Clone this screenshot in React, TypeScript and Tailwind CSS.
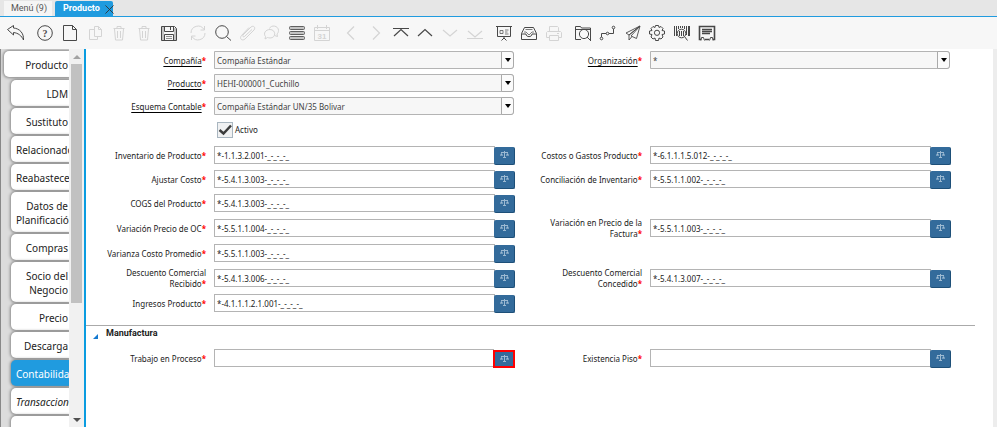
import React, { useState } from "react";

type Account = { label: string; value: string; marked?: boolean };

const sideTabs = [
  { name: "Producto", parent: true },
  { name: "LDM" },
  { name: "Sustituto" },
  { name: "Relacionado" },
  { name: "Reabastecer" },
  { name: "Datos de Planificación" },
  { name: "Compras" },
  { name: "Socio del Negocio" },
  { name: "Precio" },
  { name: "Descarga" },
  { name: "Contabilidad", active: true },
  { name: "Transacciones", italic: true },
];

const firstAccounts: (Account | null)[][] = [
  [
    { label: "Inventario de Producto", value: "*-1.1.3.2.001-_-_-_-_" },
    { label: "Costos o Gastos Producto", value: "*-6.1.1.1.5.012-_-_-_-_" },
  ],
  [
    { label: "Ajustar Costo", value: "*-5.4.1.3.003-_-_-_-_" },
    { label: "Conciliación de Inventario", value: "*-5.5.1.1.002-_-_-_-_" },
  ],
  [{ label: "COGS del Producto", value: "*-5.4.1.3.003-_-_-_-_" }, null],
];

const moreAccounts: (Account | null)[][] = [
  [
    { label: "Variación Precio de OC", value: "*-5.5.1.1.004-_-_-_-_" },
    { label: "Variación en Precio de la Factura", value: "*-5.5.1.1.003-_-_-_-_" },
  ],
  [{ label: "Varianza Costo Promedio", value: "*-5.5.1.1.003-_-_-_-_" }, null],
  [
    { label: "Descuento Comercial Recibido", value: "*-5.4.1.3.006-_-_-_-_" },
    { label: "Descuento Comercial Concedido", value: "*-5.4.1.3.007-_-_-_-_" },
  ],
  [{ label: "Ingresos Producto", value: "*-4.1.1.1.2.1.001-_-_-_-_" }, null],
];

const manufacturing: (Account | null)[][] = [
  [
    { label: "Trabajo en Proceso", value: "", marked: true },
    { label: "Existencia Piso", value: "" },
  ],
];

const trash = <path d="M3.500 4.500h11M7 4.500v-2h4v2M4.500 5l1 11h7l1-11M7.500 7v7M10.500 7v7" />;

const toolGroups = [
  [
    {
      name: "Deshacer",
      icon: <path d="M.5 5.500l6-4V4c6 .5 10.500 5 10 12-2-4.500-5.500-7-10-7.500V11z" />,
    },
  ],
  [
    {
      name: "Ayuda",
      icon: (
        <>
          <circle cx="9" cy="9" r="7.300" />
          <text x="9" y="12.500" textAnchor="middle" fontSize="10" fontWeight="700" fontFamily="Liberation Serif, serif" fill="currentColor" stroke="none">
            ?
          </text>
        </>
      ),
    },
    { name: "Nuevo", icon: <path d="M2.500 1.500h9l4 4v11h-13zM11.500 1.500v4h4" /> },
    {
      name: "Copiar",
      off: true,
      icon: <path d="M8.500 12.500v-10h4l3 3v7zM12.500 2.500v3h3M8.500 5.500h-5v10h8v-3" />,
    },
    { name: "Borrar", off: true, icon: trash },
    { name: "Borrar selección", off: true, icon: trash },
    {
      name: "Guardar",
      icon: (
        <>
          <path d="M1.500 2.500h13l2 2v12h-15zM4.500 2.500v5h9v-5M10.500 3v3M4.500 16v-5.500h9V16" />
          <path strokeWidth=".6" d="M6 12.500h6M6 14.500h6M3 3v13M15 4v12" />
        </>
      ),
    },
  ],
  [
    {
      name: "Refrescar",
      off: true,
      icon: <path d="M2 9a7 7 0 0 1 13-3.500M16 9a7 7 0 0 1-13 3.500M15.500 2v4h-4M2.500 16v-4h4" />,
    },
    {
      name: "Buscar",
      icon: (
        <>
          <circle cx="8" cy="8" r="6.300" />
          <path d="M12.500 12.500l4.500 4" />
        </>
      ),
    },
    {
      name: "Adjuntar",
      off: true,
      icon: <path d="M13 5.500l-7.500 7c-1 1-2.500-.5-1.500-1.500l8-8c2.500-2 5 .5 3 3l-9 9c-3 2.500-6-.5-3.500-3.500l7.500-8" />,
    },
    {
      name: "Chat",
      off: true,
      icon: (
        <path d="M6.500 4.500C8 .5 15.500 1.500 15.500 6.500c0 1.500-.5 2.500-1.500 3.500l.5 2.500-3-1M7 5.500c6 0 6.500 8.500 0 8.500-1 0-2-.5-2.500-.5L2 15l.5-2.500C0 9.500 2.500 5.500 7 5.500z" />
      ),
    },
    {
      name: "Cuadrícula",
      icon: (
        <g fill="#c4c4c4" stroke="#606060">
          <rect x="1.500" y="2.500" width="15" height="3" rx="1" />
          <rect x="1.500" y="7.500" width="15" height="3" rx="1" />
          <rect x="1.500" y="12.500" width="15" height="3" rx="1" />
        </g>
      ),
    },
    {
      name: "Historial",
      off: true,
      icon: (
        <>
          <path d="M1.500 3.500h15v13h-15zM1.500 6.500h15M4.500 1v4M13.500 1v4" />
          <text x="9" y="14.500" textAnchor="middle" fontSize="8" fontWeight="700" fontFamily="Liberation Sans, sans-serif" fill="currentColor" stroke="none">
            31
          </text>
        </>
      ),
    },
  ],
  [
    { name: "Atrás", off: true, icon: <path strokeWidth="1.200" d="M12 2.500L5.500 9l6.500 6.500" /> },
    { name: "Adelante", off: true, icon: <path strokeWidth="1.200" d="M6 2.500L12.500 9 6 15.500" /> },
    { name: "Primer registro", icon: <path strokeWidth="1.200" d="M1 4.500h16M2 12l7-6.500 7 6.500" /> },
    { name: "Registro anterior", icon: <path strokeWidth="1.200" d="M2 12l7-6.500 7 6.500" /> },
    { name: "Registro siguiente", off: true, icon: <path strokeWidth="1.200" d="M2 6l7 6 7-6" /> },
    { name: "Último registro", off: true, icon: <path strokeWidth="1.200" d="M2 7l7 6 7-6M1 14.500h16" /> },
  ],
  [
    {
      name: "Informe",
      icon: (
        <>
          <path d="M1 2.500h16M2.500 3v9.500h13V3M9 12.500v2M6.500 16.500L9 14l2.500 2.500" />
          <path strokeWidth=".7" d="M5 6.500h3v3H5zM10 6h3.500M10 8h2.500M10 10h3.500" />
        </>
      ),
    },
    {
      name: "Archivar",
      icon: (
        <>
          <path d="M4.500 3.500h9l3 6v6h-15v-6zM1.500 10H6c0 3.500 6 3.500 6 0h4.500" />
          <path strokeWidth=".7" d="M5.500 5.500h7M4 8h2l3 3 3-3h2" />
        </>
      ),
    },
    {
      name: "Imprimir",
      off: true,
      icon: <path d="M4.500 7V2.500h8l1 1V7M4.500 13.500h-3v-5l1-1h13l1 1v5h-3M4.500 11.500h9v5h-9zM12 9.500h2" />,
    },
  ],
  [
    {
      name: "Zoom",
      icon: (
        <>
          <path d="M7 15.500H1.500v-13h5l1 1.500h9v12M1.500 5.500h15" />
          <circle cx="10" cy="10" r="4.600" />
          <path d="M13 13l4 4" />
        </>
      ),
    },
    {
      name: "Flujo de trabajo",
      icon: (
        <>
          <path d="M2.500 13V9.500H7M10 9.500h4.500V5" />
          <circle cx="2.500" cy="14.500" r="1.300" />
          <circle cx="8.500" cy="9.500" r="1.300" />
          <circle cx="14.500" cy="3.500" r="1.300" />
        </>
      ),
    },
    {
      name: "Solicitudes",
      icon: <path strokeWidth=".9" d="M16 2L2 9l3 2zM16 2L5 11v5l3-3.500M16 2L7 12l5.500 2.500z" />,
    },
    {
      name: "Proceso",
      icon: (
        <>
          <path d="M7.500 1.500h3l.5 2 2-1 2 2-1 2 2.500.5v3L14 10.500l1 2.500-2 2-2-1-.5 2.500h-3L7 14l-2 1-2-2 1-2.500L1.500 10V7L4 6.500l-1-2 2-2 2 1z" />
          <circle cx="9" cy="8.800" r="2.600" />
        </>
      ),
    },
    {
      name: "Información del producto",
      icon: (
        <>
          <path d="M1.500 2v10M3.500 2v10M5.500 2v3M7.500 2v2M9.500 2v2M11.500 2v3M13.500 2v9" />
          <path strokeWidth="2" d="M16 2v10" />
          <circle cx="8.500" cy="9.500" r="4.300" />
          <path d="M6.500 7v5M8.500 7v5M10.500 7v5M11.500 12.500l3 4" />
        </>
      ),
    },
    {
      name: "Documento",
      icon: (
        <>
          <path strokeWidth="1.600" d="M3 15.500H1.500v-13h15v13H15M7 15.500h4" />
          <path strokeWidth="1.400" d="M4 5.500h10M4 7.500h10M4 9.500h8" />
          <path d="M3 16.500l.5-3h2l1 3M11.500 16.500l1-3h2l.5 3" />
        </>
      ),
    },
  ],
];

const Toolbar = () => (
  <div className="flex h-8 shrink-0 items-center gap-[11px] bg-[#f7f7f7] pl-[7px]">
    {toolGroups.map((group, i) => (
      <div
        key={i}
        className={`flex shrink-0 justify-between ${
          group.length === 1 ? "w-[18px]" : group.length === 3 ? "w-[68px]" : "w-[142px]"
        }`}
      >
        {group.map((tool: any) => (
          <button
            key={tool.name}
            aria-label={tool.name}
            disabled={tool.off}
            className={tool.off ? "text-[#d4d4d4]" : "text-[#484848]"}
          >
            <svg viewBox="0 0 18 18" className="block size-[18px]" fill="none" stroke="currentColor">
              {tool.icon}
            </svg>
          </button>
        ))}
      </div>
    ))}
  </div>
);

const SideBar = () => (
  <div className="flex w-[86px] shrink-0 border-r-2 border-[#0a9ce0] bg-[#f1f1f1]">
    <div className="flex w-[69px] flex-col gap-[2px] overflow-hidden border-l border-[#888] bg-[#dcdcdc] pt-[2px]">
      {sideTabs.map((tab) => (
        <button
          key={tab.name}
          className={`flex shrink-0 items-center rounded-l-[5px] pb-[5px] pl-[5px] pr-px pt-[7px] text-right text-[10px] leading-[14px] shadow-[0_0_3px_1px_#888] ${
            tab.parent ? "mb-px ml-[3px]" : "ml-[10px]"
          } ${tab.active ? "bg-[#209bdf] text-white" : "bg-white text-[#222]"} ${tab.italic ? "italic" : ""}`}
        >
          <span className="w-0 flex-1">{tab.name}</span>
        </button>
      ))}
      <div className="ml-[10px] h-[26px] shrink-0 rounded-l-[5px] bg-white shadow-[0_0_3px_1px_#888]" />
    </div>
    <div className="flex flex-1 flex-col items-center pb-[5px] pt-[6px]">
      <svg viewBox="0 0 8 4" className="h-1 w-2 shrink-0" fill="#a3a3a3">
        <path d="M0 4l4-4 4 4z" />
      </svg>
      <div className="mt-[5px] h-[239px] w-[11px] shrink-0 bg-[#c1c1c1]" />
      <svg viewBox="0 0 8 4" className="mt-auto h-1 w-2 shrink-0" fill="#505050">
        <path d="M0 0l4 4 4-4z" />
      </svg>
    </div>
  </div>
);

const FieldLabel = ({ id, text, link }: { id: string; text: string; link?: boolean }) => (
  <label htmlFor={id} className="w-32 shrink-0 pl-4 pr-2 text-right leading-[11px]">
    <span className={link ? "underline decoration-black decoration-1 underline-offset-2" : ""}>{text}</span>
    <span className="font-bold text-[#f00]">*</span>
  </label>
);

const SelectField = ({ label, value }: { label: string; value: string }) => (
  <div className="flex h-[18px] items-center pr-2">
    <FieldLabel id={label} text={label} link />
    <div className="relative h-[18px] flex-1">
      <select
        id={label}
        className="block h-full w-full appearance-none rounded-r-[3px] border border-[#b4b4b4] bg-[#f7f7f7] px-[2px] pt-px text-[#444]"
      >
        <option>{value}</option>
      </select>
      <span className="pointer-events-none absolute inset-y-0 right-0 flex w-[13px] items-center justify-center rounded-r-[3px] border border-[#aaa] bg-[#fbfbfb]">
        <svg viewBox="0 0 6 4" className="h-1 w-[6px]">
          <path d="M0 0h6L3 4z" />
        </svg>
      </span>
    </div>
  </div>
);

const AccountField = ({ label, value, marked }: Account) => {
  const [account, setAccount] = useState(value);
  return (
    <div className="flex h-[18px] items-center pr-[7px]">
      <FieldLabel id={label} text={label} />
      <input
        id={label}
        value={account}
        onChange={(e) => setAccount(e.target.value)}
        className="h-[18px] min-w-0 flex-1 border border-[#b4b4b4] bg-white px-[2px] pt-px text-[#222]"
      />
      <button
        aria-label={`Buscar ${label}`}
        className={`-mb-px -ml-px flex h-[18px] shrink-0 items-center justify-center bg-[#336b9b] ${
          marked ? "w-[22px] border-2 border-[#f00]" : "w-[21px] rounded-[2px] border-b border-r border-[#1d4f78]"
        }`}
      >
        <svg viewBox="0 0 9 8" className="h-2 w-[9px]" fill="none" stroke="#9dbad2">
          <path d="M4.500 0v7M1 1.500h7M3 6.500h3" />
          <path d="M0 4.500h3L1.500 2zM6 4.500h3L7.500 2z" fill="#9dbad2" strokeWidth=".3" />
        </svg>
      </button>
    </div>
  );
};

const AccountRows = ({ rows }: { rows: (Account | null)[][] }) => (
  <>
    {rows.map((row, i) => (
      <div key={i} className="grid grid-cols-2">
        {row.map((field) => field && <AccountField key={field.label} {...field} />)}
      </div>
    ))}
  </>
);

const App = () => {
  const [active, setActive] = useState(true);

  return (
    <div className="flex h-screen flex-col overflow-hidden bg-white font-['Noto_Sans',sans-serif] text-[8px] text-[#222]">
      <div className="flex h-[17px] shrink-0 items-end gap-[3px] border-b border-[#209bdf] bg-[#e6e6e6] pl-1 font-['Roboto',sans-serif] text-[9px]">
        <button className="h-[15px] w-12 bg-[#f5f5f5] pl-[2px] text-[#555]">Menú (9)</button>
        <div className="relative flex h-[15px] w-[58px] items-center rounded-t-[2px] bg-[#209bdf] pl-2 font-bold text-white">
          <button>Producto</button>
          <button aria-label="Cerrar" className="absolute -right-px top-1 text-[#333]">
            <svg viewBox="0 0 10 10" className="block size-[9px]" fill="none" stroke="currentColor">
              <path d="M.5.5l9 9M9.500.5l-9 9" />
            </svg>
          </button>
        </div>
      </div>
      <Toolbar />
      <div className="flex min-h-0 flex-1">
        <SideBar />
        <main className="mr-[18px] flex-1 pt-[2px]">
          <div className="flex flex-col gap-[5px] pr-[17px]">
            <div className="grid grid-cols-2">
              <SelectField label="Compañía" value="Compañía Estándar" />
              <SelectField label="Organización" value="*" />
            </div>
            <div className="grid grid-cols-2">
              <SelectField label="Producto" value="HEHI-000001_Cuchillo" />
            </div>
            <div className="grid grid-cols-2">
              <SelectField label="Esquema Contable" value="Compañía Estándar UN/35 Bolivar" />
            </div>
          </div>
          <label className="ml-[131px] mt-[7px] flex h-4 w-fit items-center gap-[2px]">
            <span className="relative block size-4">
              <input
                type="checkbox"
                checked={active}
                onChange={(e) => setActive(e.target.checked)}
                className="block size-4 appearance-none border border-[#a9b6c0] bg-[#f0f1f2]"
              />
              {active && (
                <svg viewBox="0 0 16 16" className="pointer-events-none absolute inset-0 size-4" fill="none" stroke="#3c3c3c" strokeWidth="2.500">
                  <path d="M2.500 8l4 3.500 7.500-8" />
                </svg>
              )}
            </span>
            Activo
          </label>
          <div className="mt-2 flex flex-col gap-[6px] pr-[17px]">
            <AccountRows rows={firstAccounts} />
          </div>
          <div className="mt-[7px] flex flex-col gap-[7px] pr-[17px]">
            <AccountRows rows={moreAccounts} />
          </div>
          <section className="mt-[13px] border-t border-[#aaa]">
            <button className="ml-[7px] mt-px flex h-3 items-end gap-2 font-['Roboto',sans-serif] text-[9px] font-bold leading-[12px]">
              <svg viewBox="0 0 5 5" className="size-[5px]" fill="#1479d0">
                <path d="M5 0v5H0z" />
              </svg>
              Manufactura
            </button>
            <div className="mt-[10px] pr-[17px]">
              <AccountRows rows={manufacturing} />
            </div>
          </section>
        </main>
        <div className="w-1 shrink-0 bg-[#ededed]" />
      </div>
    </div>
  );
};

export default App;
